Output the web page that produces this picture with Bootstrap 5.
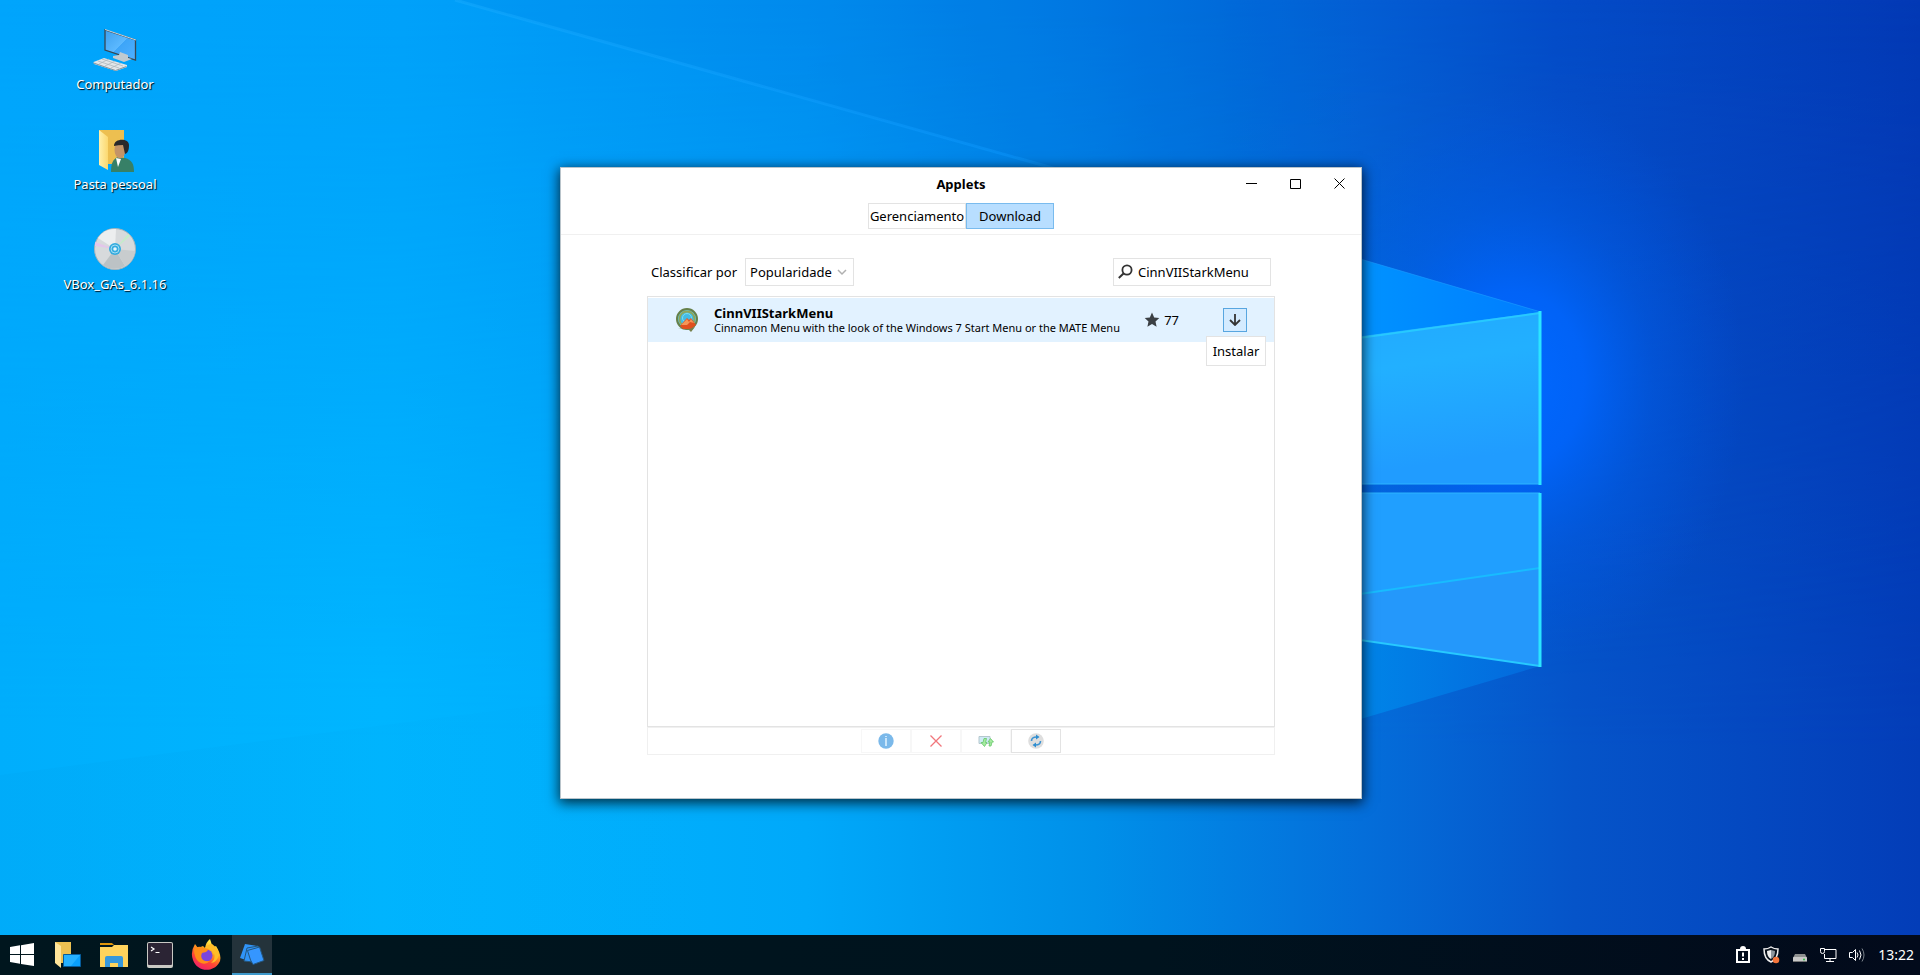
<!DOCTYPE html>
<html lang="pt-BR">
<head>
<meta charset="utf-8">
<meta name="viewport" content="width=device-width, initial-scale=1">
<title>Applets</title>
<link href="https://cdn.jsdelivr.net/npm/bootstrap@5.3.0/dist/css/bootstrap.min.css" rel="stylesheet">
<style>
  body { font-family: "Noto Sans", "Open Sans", sans-serif; font-size: 13px; line-height: 18px; color: #000; background: #0078e0; }
  .wallpaper { position: absolute; inset: 0; width: 100%; height: 100%; }
  .desktop-icons { padding: 24px 0 0 45px; }
  .desktop-icon { width: 140px; height: 100px; color: #fff; text-shadow: 1px 1px 1px #000; }
  .desktop-icon:hover { color: #fff; }
  .app-window { position: absolute; left: 560px; top: 167px; width: 802px; max-width: 100%; height: 632px;
    background: #fff; border: 1px solid #b9c4cb; box-shadow: 0 3px 12px 1px rgba(0,0,0,.75); }
  .title-bar { height: 31px; }
  .win-buttons { position: absolute; right: 0; top: 0; }
  .win-buttons .btn { width: 44px; height: 31px; }
  .btn { --bs-btn-border-radius: 0; --bs-btn-font-size: 13px; --bs-btn-padding-x: 0; --bs-btn-padding-y: 0; --bs-btn-border-color: #e3e3e3; --bs-btn-color: #000; line-height: 18px; }
  .win-buttons .btn { --bs-btn-border-color: transparent; }
  .mode-tabs { height: 36px; padding-top: 4px; border-bottom: 1px solid #f0f0f0; }
  .mode-tabs .btn { height: 26px; width: 98px; }
  .mode-tabs .btn.active { width: 88px; --bs-btn-active-bg: #b8deff; --bs-btn-active-border-color: #79bbee; --bs-btn-active-color: #000; }
  .page-body { padding: 23px 86px 43px; }
  .filter-row { height: 28px; padding: 0 4px; margin-bottom: 10px; }
  .sort-select { width: 109px; height: 28px; padding: 0 18px 0 4px; font-size: 13px; line-height: 18px; color: #000; border: 1px solid #e3e3e3; border-radius: 0; background-position: right 6px center; background-size: 10px 7px;
    background-image: url("data:image/svg+xml,%3Csvg xmlns='http://www.w3.org/2000/svg' viewBox='0 0 10 7'%3E%3Cpath d='M1 1l4 4 4-4' fill='none' stroke='%23b0b0b0' stroke-width='1.5'/%3E%3C/svg%3E"); }
  .search-box { width: 158px; height: 28px; border: 1px solid #e3e3e3; padding-left: 4px; }
  .search-box input { font-size: 13px; line-height: 18px; color: #000; padding: 0; min-width: 0; }
  .applet-list { border: 1px solid #e3e3e3; padding-top: 1px; }
  .applet-row { height: 44px; background: #e2f2ff; padding: 0 27px 0 28px; }
  .applet-name { font-size: 13px; line-height: 16px; }
  .applet-text { font-size: 11px; line-height: 14px; }
  .applet-score { margin-right: 44px; }
  .install-btn { width: 24px; height: 24px; --bs-btn-border-color: #58a6e0; --bs-btn-bg: #d4ebff; }
  .tip { position: absolute; right: -19px; top: 28px; width: 60px; height: 30px; line-height: 28px; background: #fff; border: 1px solid #e3e3e3; }
  .tool-strip { height: 28px; border: 1px solid #f0f0f0; }
  .tool-strip .btn { width: 50px; height: 24px; --bs-btn-border-color: #f7f7f7; --bs-btn-disabled-border-color: #f7f7f7; --bs-btn-disabled-opacity: 1; }
  .tool-strip .btn.live { --bs-btn-border-color: #e3e3e3; }
  .task-bar { height: 40px; background: linear-gradient(90deg, #00161e, #00131e 60%, #020a1b); padding: 0 6px 0 2px; gap: 6px; }
  .task-bar .btn { width: 40px; height: 40px; border: 0; }
  .task-bar .btn.running { background: #24333b; border-bottom: 2px solid #3d99cb; }
  .tray { gap: 12px; color: #fff; }
  .tray time { font-size: 14px; }
  svg { display: block; flex: none; }
</style>
</head>
<body class="vh-100 overflow-hidden">
<div class="d-flex flex-column h-100">
<main class="position-relative flex-grow-1">
  <svg class="wallpaper" viewBox="0 0 1920 935" preserveAspectRatio="none" aria-hidden="true">
    <defs>
      <linearGradient id="skyTop"><stop offset="0" stop-color="#00a5fc"/><stop offset=".21" stop-color="#00a1fa"/><stop offset=".42" stop-color="#008ef0"/><stop offset=".57" stop-color="#0078e3"/><stop offset=".71" stop-color="#045ed4"/><stop offset=".81" stop-color="#044cc8"/><stop offset="1" stop-color="#0339b5"/></linearGradient>
      <linearGradient id="skyLow"><stop offset="0" stop-color="#00aefc"/><stop offset=".2" stop-color="#00b6ff"/><stop offset=".42" stop-color="#00a9fa"/><stop offset=".57" stop-color="#0090e9"/><stop offset=".71" stop-color="#046eda"/><stop offset=".82" stop-color="#0554c9"/><stop offset="1" stop-color="#033db8"/></linearGradient>
      <linearGradient id="fade" x1="0" y1="0" x2="0" y2="1"><stop offset="0" stop-color="#000"/><stop offset=".8" stop-color="#fff"/></linearGradient>
      <mask id="lower"><rect width="1920" height="935" fill="url(#fade)"/></mask>
      <radialGradient id="glow"><stop offset="0" stop-color="#0068ff"/><stop offset=".3" stop-color="#0066ff" stop-opacity=".85"/><stop offset=".6" stop-color="#0060f0" stop-opacity=".4"/><stop offset="1" stop-color="#0058e8" stop-opacity="0"/></radialGradient>
      <linearGradient id="paneA" x1="0" y1="0" x2=".3" y2="1"><stop offset="0" stop-color="#22a6ff"/><stop offset=".45" stop-color="#22b0ff"/><stop offset="1" stop-color="#209cff"/></linearGradient>
      <linearGradient id="beam" gradientUnits="userSpaceOnUse" x1="455" y1="0" x2="1040" y2="165"><stop offset="0" stop-color="#18acff" stop-opacity=".8"/><stop offset="1" stop-color="#0e98ff" stop-opacity=".7"/></linearGradient>
      <linearGradient id="ray" gradientUnits="userSpaceOnUse" x1="1364" y1="0" x2="1542" y2="0"><stop offset="0" stop-color="#0092ff"/><stop offset="1" stop-color="#007dff"/></linearGradient>
      <linearGradient id="rayLow" gradientUnits="userSpaceOnUse" x1="1364" y1="0" x2="1542" y2="0"><stop offset="0" stop-color="#0084e8"/><stop offset="1" stop-color="#0468dc"/></linearGradient>
      <linearGradient id="floor"><stop offset="0" stop-color="#00a4f0" stop-opacity=".25"/><stop offset="1" stop-color="#00a4f0" stop-opacity="0"/></linearGradient>
    </defs>
    <rect width="1920" height="935" fill="url(#skyTop)"/>
    <rect width="1920" height="935" fill="url(#skyLow)" mask="url(#lower)"/>
    <ellipse cx="1515" cy="380" rx="230" ry="290" fill="url(#glow)"/>
    <path d="M455 0 1060 170H1340V0Z" fill="#0062cc" opacity=".08"/>
    <path d="M455 0 1060 170" stroke="url(#beam)" stroke-width="3" fill="none" opacity=".6"/>
    <path d="M0 775 700 684V935H0Z" fill="url(#floor)"/>
    <path d="M1200 212 1541 312 1200 360Z" fill="url(#ray)"/>
    <path d="M1200 212 1541 312" stroke="#1c9cff" fill="none" opacity=".6"/>
    <path d="M1200 618 1540 666 1364 718 1200 770Z" fill="url(#rayLow)"/>
    <path d="M1200 358 1540 312V484H1200Z" fill="url(#paneA)"/>
    <path d="M1200 493H1540V666L1200 617Z" fill="#209fff"/>
    <path d="M1200 617 1540 666V568L1200 617Z" fill="#2498fb"/>
    <path d="M1200 617 1540 568" stroke="#18bcff" stroke-width="2"/>
    <path d="M1200 484H1540M1200 493H1540" stroke="#2cb5ff"/>
    <path d="M1200 360 1540 313M1540 666 1200 617" stroke="#27c9ff" stroke-width="2" fill="none"/>
    <path d="M1540 311V485M1540 493V667" stroke="#2be5ff" stroke-width="3"/>
  </svg>

  <nav class="desktop-icons position-relative d-flex flex-column align-items-start" aria-label="Área de trabalho">
    <a class="desktop-icon d-flex flex-column align-items-center text-decoration-none" href="#">
      <svg width="48" height="51" viewBox="0 0 48 51"><defs><linearGradient id="scr" x1="0" y1="0" x2="1" y2="1"><stop stop-color="#3d9fee"/><stop offset=".5" stop-color="#5cb9ff"/><stop offset=".51" stop-color="#3da5f8"/><stop offset="1" stop-color="#4fb0ff"/></linearGradient></defs><path d="M14 6 44.500 16V36L14 26Z" fill="url(#scr)" stroke="#394752" stroke-width="1.3"/><path d="M14 5.500 45 16" stroke="#c9d3da"/><path d="M22 32l6-1 1-3 8 3v3l4 1-8 3-11-4z" fill="#c1cad0"/><path d="M2.500 38 13 34 36 41v2L25 47 3 40Z" fill="#e2e6e9"/><path d="M2.500 39l22 7.500 11-4" fill="none" stroke="#88949c"/><path d="M7 37l21 7M11 35l21 7M8 40l10-5M14 42l10-5M20 44l10-5" stroke="#a9b3b9" stroke-width=".7"/></svg>
      <span>Computador</span>
    </a>
    <a class="desktop-icon d-flex flex-column align-items-center text-decoration-none" href="#">
      <svg width="48" height="51" viewBox="0 0 48 51"><defs><linearGradient id="fold"><stop stop-color="#fff0ac"/><stop offset="1" stop-color="#fcd86f"/></linearGradient></defs><path d="M8 6H33V40H15Z" fill="#edbf50"/><path d="M8 6 17 13V46L8 41Z" fill="url(#fold)"/><path d="M20 48c0-9 2-13 7-15l7 1c7 2 9 6 9 14Z" fill="#378067"/><path d="M25 34l2 9 3-8z" fill="#fff"/><ellipse cx="29" cy="26" rx="5.500" ry="8.500" fill="#c39468"/><path d="M23 22c0-8 15-8 15-1 0 5-1 8-4 9l-2-9q-5 0-9 1z" fill="#29292b"/></svg>
      <span>Pasta pessoal</span>
    </a>
    <a class="desktop-icon d-flex flex-column align-items-center text-decoration-none" href="#">
      <svg width="48" height="51" viewBox="0 0 48 51"><circle cx="24" cy="25" r="20.5" fill="#d7dadc" stroke="#a5b4bc"/><path d="M24 25 7 14A20 20 0 0 1 25 5Z" fill="#eceeef"/><path d="M24 25 12 41A20 20 0 0 0 34 42Z" fill="#bcc2c5"/><path d="M24 25 44 27A20 20 0 0 1 34 42Z" fill="#c8ccce"/><path d="M24 25 4 18v4Z" fill="#e3c6ea"/><path d="M24 25 37 10l2 2Z" fill="#c4edc9"/><circle cx="24" cy="25" r="6" fill="#35acdf"/><circle cx="24" cy="25" r="4" fill="none" stroke="#a5dcf2"/><circle cx="24" cy="25" r="1.8" fill="#e8f7fd"/></svg>
      <span>VBox_GAs_6.1.16</span>
    </a>
  </nav>

  <section class="app-window d-flex flex-column" aria-label="Applets">
    <header class="title-bar d-flex align-items-center justify-content-center fw-bold">Applets
      <div class="win-buttons d-flex">
        <button class="btn d-flex align-items-center justify-content-center" aria-label="Minimizar"><svg width="11" height="11"><path d="M0 5.5H11" stroke="#000"/></svg></button>
        <button class="btn d-flex align-items-center justify-content-center" aria-label="Maximizar"><svg width="11" height="10"><path d="M.5.5h10v9H.5z" fill="none" stroke="#000"/></svg></button>
        <button class="btn d-flex align-items-center justify-content-center" aria-label="Fechar"><svg width="11" height="11"><path d="M.5.5l10 10m0-10l-10 10" stroke="#000"/></svg></button>
      </div>
    </header>
    <div class="mode-tabs d-flex justify-content-center">
      <button class="btn">Gerenciamento</button><button class="btn active">Download</button>
    </div>
    <div class="page-body d-flex flex-column flex-grow-1">
      <div class="filter-row d-flex align-items-center">
        <label for="sort" class="me-2">Classificar por</label>
        <select id="sort" class="form-select sort-select"><option>Popularidade</option></select>
        <div class="search-box d-flex align-items-center gap-1 ms-auto">
          <svg width="16" height="16" viewBox="0 0 16 16"><circle cx="9" cy="6" r="4.6" fill="none" stroke="#333" stroke-width="1.8"/><path d="M5.5 9.5.8 14" stroke="#333" stroke-width="2"/></svg>
          <input class="form-control border-0 shadow-none" type="text" value="CinnVIIStarkMenu" aria-label="Pesquisar">
        </div>
      </div>
      <div class="applet-list flex-grow-1">
        <div class="applet-row d-flex align-items-center">
          <svg width="22" height="26" viewBox="0 0 22 26"><circle cx="11" cy="12" r="10" fill="#68c6d4" stroke="#66804a" stroke-width="2"/><circle cx="11" cy="12" r="7.500" fill="#43bbe4" stroke="#8fa65a" stroke-width="1.8"/><circle cx="11" cy="11" r="4.500" fill="none" stroke="#7dddef"/><path d="M4 19 11 11l2 2 2-2 5 7-5 4-8 0z" fill="#e0501f"/><path d="M5 18l6-6 2 3 2-3 3 4-4-1-3 3z" fill="#f59656"/><path d="M2 21q8 3 17-1l-4 5-2-2z" fill="#75804c"/></svg>
          <div class="flex-grow-1 ps-3">
            <div class="applet-name fw-bold">CinnVIIStarkMenu</div>
            <div class="applet-text">Cinnamon Menu with the look of the Windows 7 Start Menu or the MATE Menu</div>
          </div>
          <div class="applet-score d-flex align-items-center gap-1">
            <svg width="16" height="16" viewBox="0 0 16 16"><path d="M8 .5 10.2 5.6 15.3 6 11.5 9.4 12.6 14.7 8 12 3.4 14.7 4.5 9.4.7 6 5.8 5.6Z" fill="#3b4044"/></svg>
            <span>77</span>
          </div>
          <div class="position-relative">
            <button class="btn install-btn d-flex align-items-center justify-content-center" aria-describedby="install-tip" aria-label="Instalar"><svg width="12" height="12"><path d="M6 0v11M1 6l5 5 5-5" fill="none" stroke="#333" stroke-width="1.8"/></svg></button>
            <div id="install-tip" class="tip text-center" role="tooltip">Instalar</div>
          </div>
        </div>
      </div>
      <div class="tool-strip d-flex align-items-center justify-content-center">
        <button class="btn d-flex align-items-center justify-content-center" disabled aria-label="Informações"><svg width="16" height="16"><circle cx="8" cy="8" r="7.7" fill="#7bb9ea"/><path d="M8 3v1M8 5v8" stroke="#c9e5fa" stroke-width="2"/></svg></button>
        <button class="btn d-flex align-items-center justify-content-center" disabled aria-label="Desinstalar"><svg width="12" height="12"><path d="M.5.5l11 11m0-11l-11 11" stroke="#f1767c" stroke-width="1.3"/></svg></button>
        <button class="btn d-flex align-items-center justify-content-center" disabled aria-label="Atualizar applets"><svg width="16" height="16"><path d="M1 3.500h11v7H1z" fill="#cfeaf5" stroke="#b5c7ce"/><path d="M6 5.500 5 9.500H3l3.500 4L9 9.500H7.500l1-4zM12.500 5.500l3 3.500h-1.500l-1 4h-2l1-4h-2z" fill="#a6eba0" stroke="#66c869" stroke-width=".8"/></svg></button>
        <button class="btn live d-flex align-items-center justify-content-center" aria-label="Recarregar"><svg width="16" height="16"><circle cx="8" cy="8" r="7.8" fill="#dedede"/><path d="M3.500 8q0-4 5-4M12.500 8q0 4-5 4" fill="none" stroke="#3d94d2" stroke-width="1.600"/><path d="M8 1.500 11.5 4 8 6.5zM8 9.5 4.5 12 8 14.5z" fill="#2e8dd0"/></svg></button>
      </div>
    </div>
  </section>
</main>

<footer class="task-bar d-flex align-items-center position-relative">
  <button class="btn d-flex align-items-center justify-content-center" aria-label="Menu"><svg width="24" height="24"><path d="M0 4 10 2.3V11H0ZM11 2.2 24 0v11H11ZM0 12H10v8.7L0 19ZM11 12H24V23L11 21Z" fill="#fff"/></svg></button>
  <button class="btn d-flex align-items-center justify-content-center" aria-label="Mostrar área de trabalho"><svg width="28" height="28"><path d="M1 1H17V22H6Z" fill="#edc152"/><path d="M1 1 7 5V27L1 22Z" fill="#ffe59a"/><path d="M9.5 13.5h17v12h-17z" fill="#0aa0fb" stroke="#065c9b"/><path d="M10 14h16L17 25h-7z" fill="#26b1ff"/></svg></button>
  <button class="btn d-flex align-items-center justify-content-center" aria-label="Arquivos"><svg width="28" height="26"><path d="M0 1h12l2 2H0Z" fill="#df960a"/><path d="M0 5h12l2-2h14v22H0Z" fill="#ffd35c"/><path d="M5 25V16q0-2 2-2h14q2 0 2 2v9h-5v-4h-8v4z" fill="#3798dc"/></svg></button>
  <button class="btn d-flex align-items-center justify-content-center" aria-label="Terminal"><svg width="26" height="26"><rect width="26" height="26" rx="2" fill="#c9c9c4"/><rect x="1" y="1" width="24" height="22" rx="1" fill="#2b2434"/><path d="M4 5l3 2-3 2M8.500 10.500h4" fill="none" stroke="#fff" stroke-width="1.2"/></svg></button>
  <button class="btn d-flex align-items-center justify-content-center" aria-label="Firefox"><svg width="30" height="32" viewBox="0 0 30 32"><defs><linearGradient id="fox" x1=".8" y1="0" x2=".3" y2="1"><stop offset=".1" stop-color="#fff34e"/><stop offset=".4" stop-color="#ffa21b"/><stop offset=".7" stop-color="#ff4436"/><stop offset="1" stop-color="#f01f6c"/></linearGradient></defs><path d="M4 5l3 4 5-2 2 2q1-6 5-9 1 5 4 8l2-1q7 11 3 17c-6 10-22 9-26-3Q-1 13 4 5Z" fill="url(#fox)"/><circle cx="15.500" cy="16.500" r="6" fill="#7c45dc"/><path d="M3 10q4-4 10-1l5 1-3 3-4 1q-2 4 1 7 3 2 7 1-5 5-11 1-5-4-5-13Z" fill="#ff8d18"/><path d="M14 9q8 0 8 7l1-2q2 6-3 10 6-1 8-8-1-7-7-11-4 0-7 4Z" fill="#ffbd27"/></svg></button>
  <button class="btn running d-flex align-items-center justify-content-center" aria-label="Applets"><svg width="26" height="24"><path d="M6 2 18 4 13 20 1 16Z" fill="#3094f8"/><path d="M8 6 19 4 22 8 14 20 5 19Z" fill="#3094f8" stroke="#24567d"/><path d="M8.500 8.500 20.500 5 25 18.500 14 22.500 11.500 18Z" fill="#3596ff" stroke="#24567d"/></svg></button>
  <div class="tray d-flex align-items-center ms-auto">
    <svg width="16" height="18"><path d="M2 4h12v12H2z" fill="none" stroke="#fff" stroke-width="2"/><path d="M5 3q0-3 3-3t3 3v1H5z" fill="#fff"/><path d="M8 6.500v4M8 12v2" stroke="#fff" stroke-width="2"/></svg>
    <svg width="17" height="18"><path d="M8 1q3 2 7 2 0 10-7 13Q1 13 1 3q4 0 7-2Z" fill="#09121c" stroke="#eee" stroke-width="1.5"/><path d="M8 4v9q-4-2-4-8z" fill="#eee"/><path d="M8 4v9q4-2 4-8z" fill="#8d969d"/><circle cx="13" cy="14" r="3.300" fill="#f4753b"/></svg>
    <svg width="16" height="20"><path d="M3 9h10l2 4H1z" fill="#8d9090"/><rect x="1" y="12" width="14" height="5" rx="1" fill="#c8c8c8"/><path d="M1 16.500h14" stroke="#777"/><circle cx="12" cy="14.500" r="1" fill="#2bbf42"/></svg>
    <svg width="17" height="16"><path d="M5 2.500h11v9H4.500V7M10 12v3M6 14.500h8" fill="none" stroke="#fff"/><path d="M.5 1.500h4v3q0 2-2 2t-2-2z" fill="none" stroke="#fff"/></svg>
    <svg width="17" height="16"><path d="M.5 5.500h3l3-3v11l-3-3h-3z" fill="none" stroke="#fff"/><path d="M8 5.500q2 2.500 0 5M10.500 3.500q3 4.500 0 9" fill="none" stroke="#fff"/><path d="M13 1.500q4 6.500 0 13" fill="none" stroke="#7b838b"/></svg>
    <time datetime="13:22">13:22</time>
  </div>
</footer>
</div>
<script src="https://cdn.jsdelivr.net/npm/bootstrap@5.3.0/dist/js/bootstrap.bundle.min.js"></script>
</body>
</html>
